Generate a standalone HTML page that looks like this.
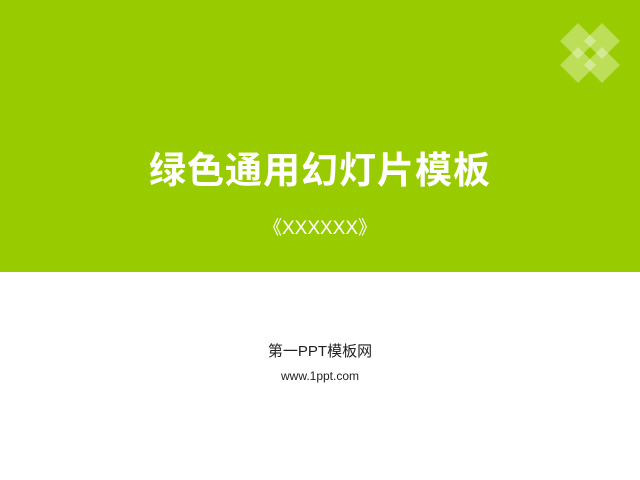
<!DOCTYPE html>
<html><head><meta charset="utf-8"><style>
body{margin:0;width:640px;height:480px;background:#fff;position:relative;overflow:hidden;font-family:"Liberation Sans","Noto Sans CJK SC",sans-serif}
.top{position:absolute;left:0;top:0;width:640px;height:272px;background:#99cc00}
.t{position:absolute;width:640px;text-align:center;left:0}
</style></head><body>
<div class="top"></div>
<svg style="position:absolute;left:0;top:0" width="640" height="272">
<g fill="#fff" fill-opacity="0.35">
<polygon points="578,23 596,41 578,59 560,41"/>
<polygon points="602,23 620,41 602,59 584,41"/>
<polygon points="578,47 596,65 578,83 560,65"/>
<polygon points="602,47 620,65 602,83 584,65"/>
</g></svg>
<div class="t" style="top:140px;font-size:37px;font-weight:bold;color:#fff;letter-spacing:1px">绿色通用幻灯片模板</div>
<div class="t" style="top:213px;font-size:19px;color:#fff">《XXXXXX》</div>
<div class="t" style="top:340px;font-size:15px;color:#222">第一PPT模板网</div>
<div class="t" style="top:369px;font-size:12px;color:#222">www.1ppt.com</div>
</body></html>
